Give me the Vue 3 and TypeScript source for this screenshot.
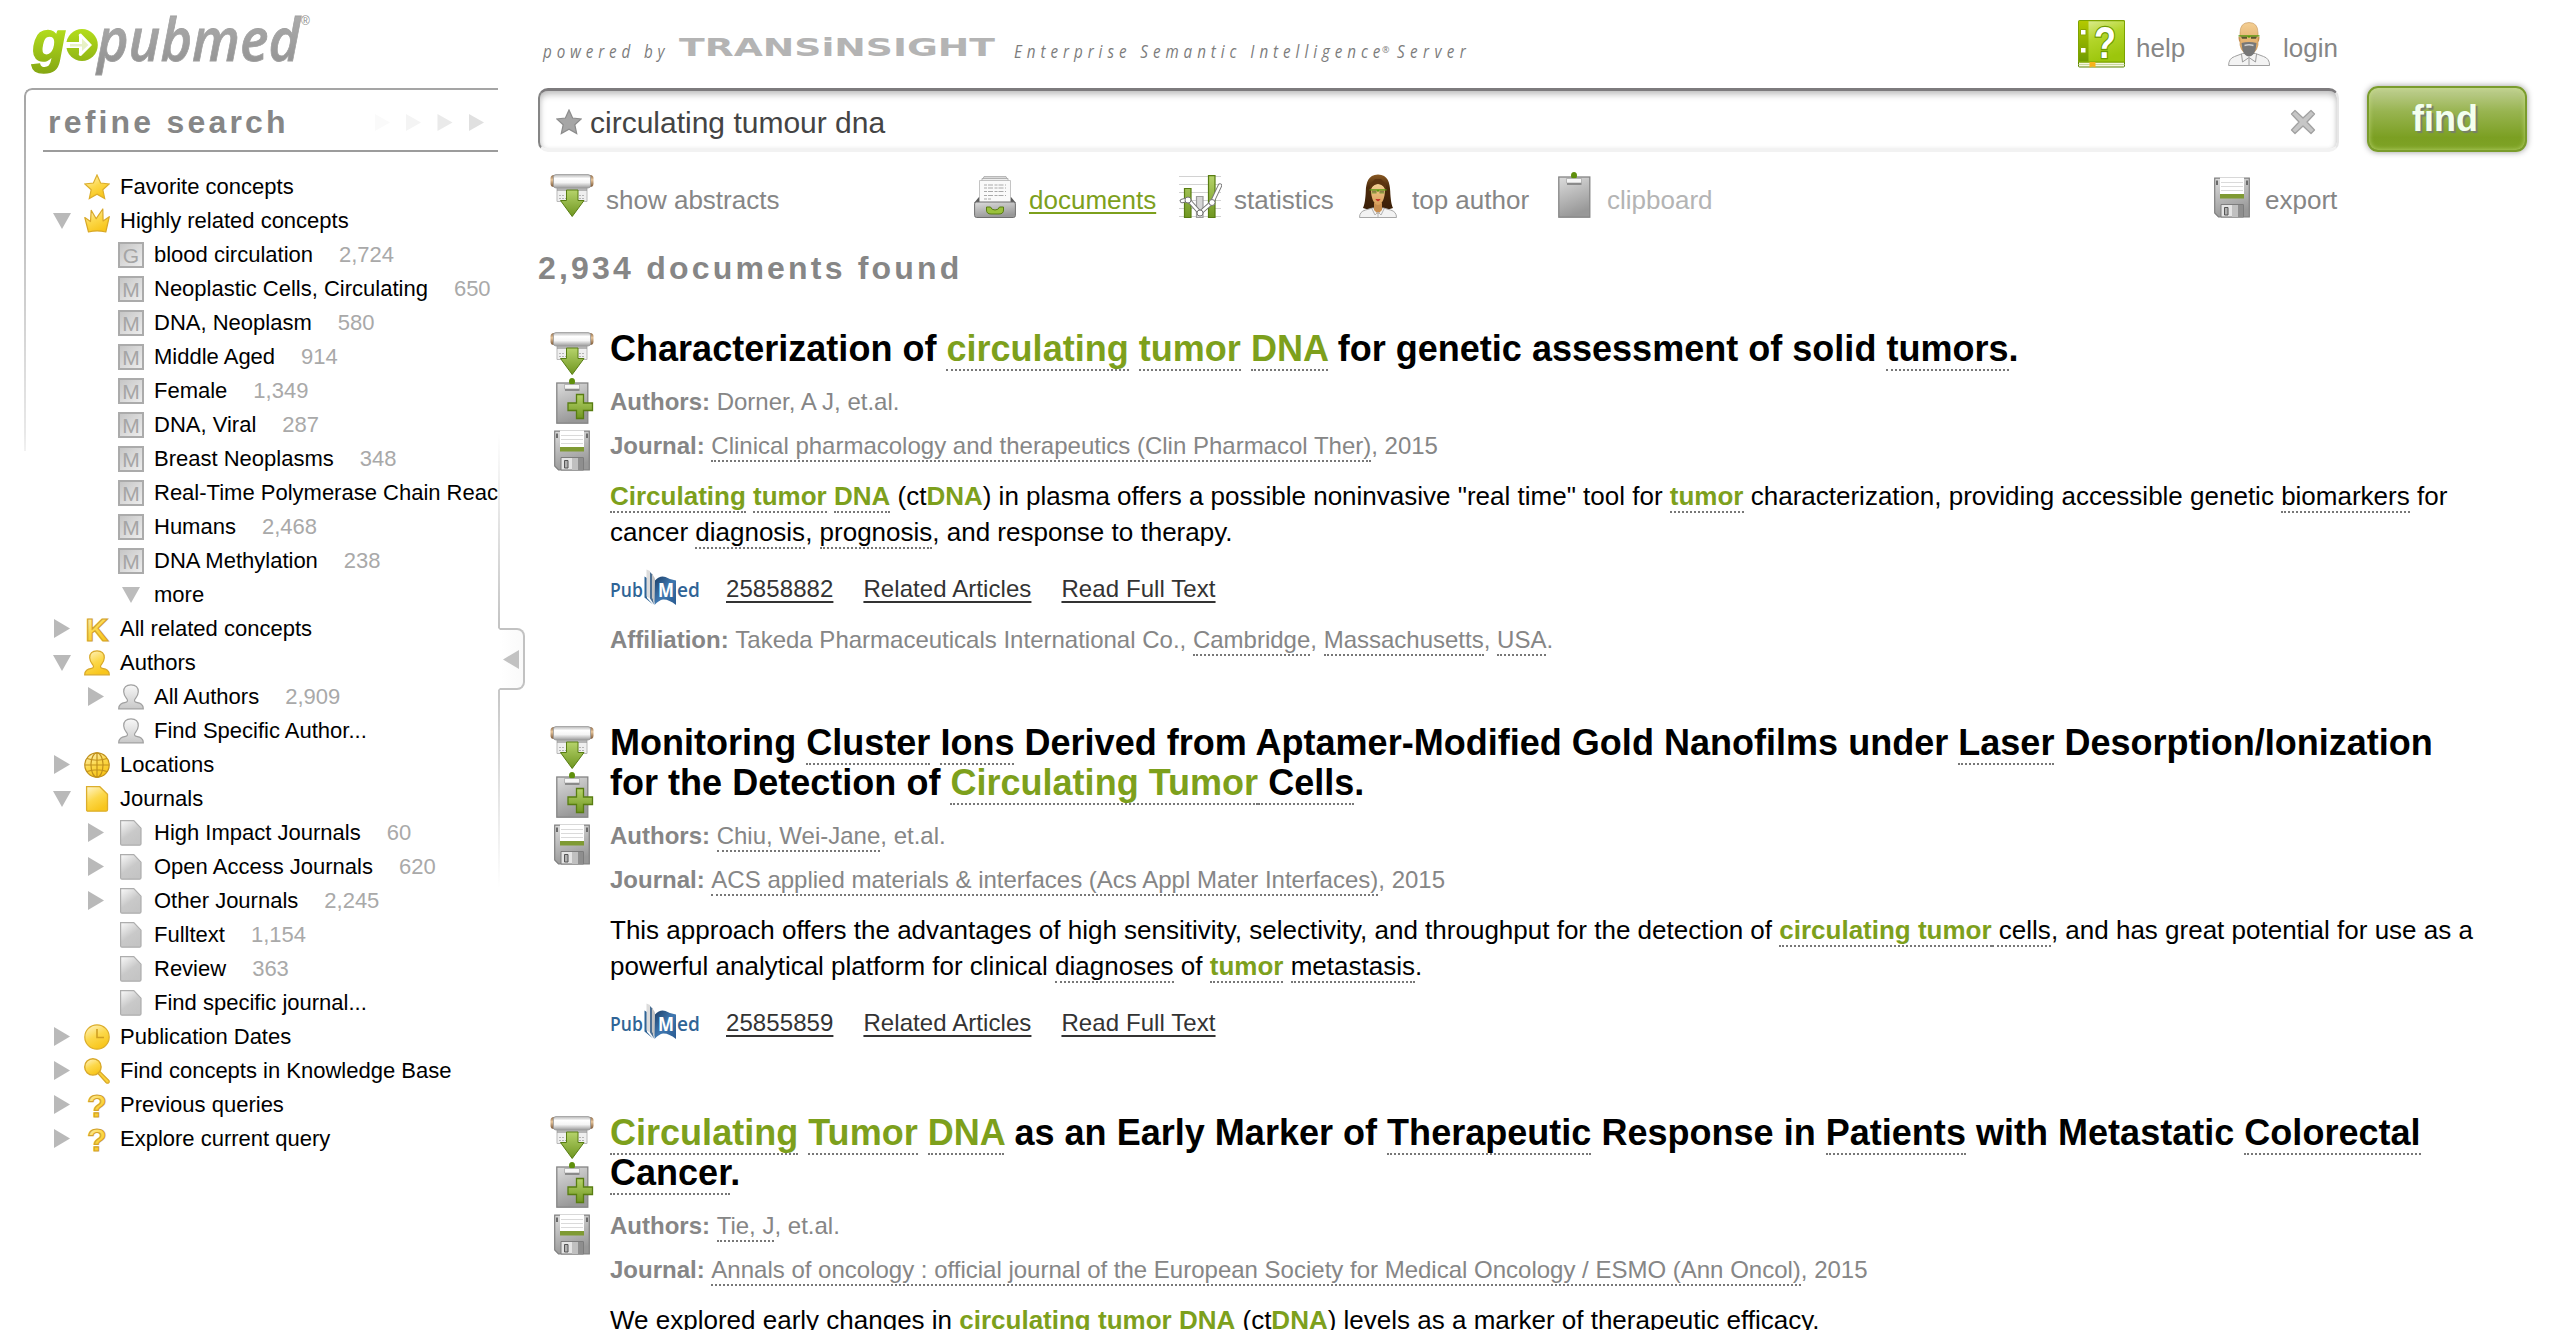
<script setup lang="ts">
type Run = [text: string, style?: string]

interface TreeNode {
  label: string
  level: 1 | 2
  icon: string
  toggle?: 'open' | 'closed'
  count?: string
}

interface Result {
  title: Run[]
  authors: Run[]
  journal: string
  body: Run[]
  pmid: string
  affiliation?: Run[]
}

interface Tool {
  label: string
  icon: string
  w: number
  h: number
  slot: number
  state?: string
}

const mesh = (label: string, count?: string): TreeNode => ({ label, level: 2, icon: 'M', count })

const tree: TreeNode[] = [
  { label: 'Favorite concepts', level: 1, icon: 'star' },
  { label: 'Highly related concepts', level: 1, icon: 'crown', toggle: 'open' },
  { label: 'blood circulation', level: 2, icon: 'G', count: '2,724' },
  mesh('Neoplastic Cells, Circulating', '650'),
  mesh('DNA, Neoplasm', '580'),
  mesh('Middle Aged', '914'),
  mesh('Female', '1,349'),
  mesh('DNA, Viral', '287'),
  mesh('Breast Neoplasms', '348'),
  mesh('Real-Time Polymerase Chain Reaction'),
  mesh('Humans', '2,468'),
  mesh('DNA Methylation', '238'),
  { label: 'more', level: 2, icon: 'down' },
  { label: 'All related concepts', level: 1, icon: 'letter-K', toggle: 'closed' },
  { label: 'Authors', level: 1, icon: 'person', toggle: 'open' },
  { label: 'All Authors', level: 2, icon: 'person-grey', toggle: 'closed', count: '2,909' },
  { label: 'Find Specific Author...', level: 2, icon: 'person-grey' },
  { label: 'Locations', level: 1, icon: 'globe', toggle: 'closed' },
  { label: 'Journals', level: 1, icon: 'page', toggle: 'open' },
  { label: 'High Impact Journals', level: 2, icon: 'page-grey', toggle: 'closed', count: '60' },
  { label: 'Open Access Journals', level: 2, icon: 'page-grey', toggle: 'closed', count: '620' },
  { label: 'Other Journals', level: 2, icon: 'page-grey', toggle: 'closed', count: '2,245' },
  { label: 'Fulltext', level: 2, icon: 'page-grey', count: '1,154' },
  { label: 'Review', level: 2, icon: 'page-grey', count: '363' },
  { label: 'Find specific journal...', level: 2, icon: 'page-grey' },
  { label: 'Publication Dates', level: 1, icon: 'clock', toggle: 'closed' },
  { label: 'Find concepts in Knowledge Base', level: 1, icon: 'lens', toggle: 'closed' },
  { label: 'Previous queries', level: 1, icon: 'letter-?', toggle: 'closed' },
  { label: 'Explore current query', level: 1, icon: 'letter-?', toggle: 'closed' },
]

const tools: Tool[] = [
  { label: 'show abstracts', icon: 'scroll', w: 44, h: 44, slot: 56 },
  { label: 'documents', icon: 'cabinet', w: 42, h: 42, slot: 55, state: 'active' },
  { label: 'statistics', icon: 'chart', w: 43, h: 43, slot: 55 },
  { label: 'top author', icon: 'woman', w: 38, h: 44, slot: 53 },
  { label: 'clipboard', icon: 'clip', w: 36, h: 46, slot: 49, state: 'disabled' },
  { label: 'export', icon: 'floppy', w: 36, h: 41, slot: 51 },
]

const results: Result[] = [
  {
    title: [
      ['Characterization of '], ['circulating', 'hit term'], [' '], ['tumor', 'hit term'], [' '], ['DNA', 'hit term'],
      [' for genetic assessment of solid '], ['tumors', 'term'], ['.'],
    ],
    authors: [['Dorner, A J, et.al.']],
    journal: 'Clinical pharmacology and therapeutics (Clin Pharmacol Ther)',
    body: [
      ['Circulating', 'hit term'], [' '], ['tumor', 'hit term'], [' '], ['DNA', 'hit term'], [' (ct'], ['DNA', 'hit'],
      [') in plasma offers a possible noninvasive "real time" tool for '], ['tumor', 'hit term'],
      [' characterization, providing accessible genetic '], ['biomarkers', 'term'], [' for cancer '],
      ['diagnosis', 'term'], [', '], ['prognosis', 'term'], [', and response to therapy.'],
    ],
    pmid: '25858882',
    affiliation: [
      ['Takeda Pharmaceuticals International Co., '], ['Cambridge', 'term'], [', '], ['Massachusetts', 'term'],
      [', '], ['USA', 'term'], ['.'],
    ],
  },
  {
    title: [
      ['Monitoring '], ['Cluster', 'term'], [' '], ['Ions', 'term'],
      [' Derived from Aptamer-Modified Gold Nanofilms under '], ['Laser', 'term'],
      [' Desorption/Ionization for the Detection of '], ['Circulating Tumor', 'hit term'], [' Cells', 'term'], ['.'],
    ],
    authors: [['Chiu, Wei-Jane', 'term'], [', et.al.']],
    journal: 'ACS applied materials & interfaces (Acs Appl Mater Interfaces)',
    body: [
      ['This approach offers the advantages of high sensitivity, selectivity, and throughput for the detection of '],
      ['circulating tumor', 'hit term'], [' cells', 'term'],
      [', and has great potential for use as a powerful analytical platform for clinical '], ['diagnoses', 'term'],
      [' of '], ['tumor', 'hit term'], [' '], ['metastasis', 'term'], ['.'],
    ],
    pmid: '25855859',
  },
  {
    title: [
      ['Circulating', 'hit term'], [' '], ['Tumor', 'hit term'], [' '], ['DNA', 'hit term'],
      [' as an Early Marker of '], ['Therapeutic', 'term'], [' Response in '], ['Patients', 'term'],
      [' with Metastatic '], ['Colorectal', 'term'], [' '], ['Cancer', 'term'], ['.'],
    ],
    authors: [['Tie, J', 'term'], [', et.al.']],
    journal: 'Annals of oncology : official journal of the European Society for Medical Oncology / ESMO (Ann Oncol)',
    body: [
      ['We explored early changes in '], ['circulating', 'hit term'], [' '], ['tumor', 'hit term'], [' '],
      ['DNA', 'hit term'], [' (ct'], ['DNA', 'hit'], [') levels as a marker of therapeutic efficacy.'],
    ],
    pmid: '25851626',
  },
]
</script>

<template>
  <div class="page">
    <svg class="defs" width="0" height="0" aria-hidden="true">
      <defs>
        <linearGradient id="gold" x1="0" y1="0" x2=".5" y2="1"><stop offset="0" stop-color="#fff6d0" /><stop offset=".55" stop-color="#fcd84a" /><stop offset="1" stop-color="#f8c61c" /></linearGradient>
        <linearGradient id="silver" x1="0" y1="0" x2=".6" y2="1"><stop offset="0" stop-color="#fafafa" /><stop offset=".6" stop-color="#c9c9c9" /><stop offset="1" stop-color="#c4c4c4" /></linearGradient>
        <linearGradient id="silverSoft" x1="0" y1="0" x2="0" y2="1"><stop offset="0" stop-color="#f8f8f8" /><stop offset="1" stop-color="#c8c8c8" /></linearGradient>
        <linearGradient id="metal" x1="0" y1="0" x2=".3" y2="1"><stop offset="0" stop-color="#dcdcdc" /><stop offset="1" stop-color="#989898" /></linearGradient>
        <linearGradient id="roll" x1="0" y1="0" x2="0" y2="1"><stop offset="0" stop-color="#b5b5b5" /><stop offset=".3" stop-color="#fff" /><stop offset=".6" stop-color="#f4f4f4" /><stop offset="1" stop-color="#9a9a9a" /></linearGradient>
        <linearGradient id="wood" x1="0" y1="0" x2="0" y2="1"><stop offset="0" stop-color="#8d6b4a" /><stop offset=".4" stop-color="#e6c49a" /><stop offset="1" stop-color="#7a5636" /></linearGradient>
        <linearGradient id="leaf" x1="0" y1="0" x2="0" y2="1"><stop offset="0" stop-color="#b6d36b" /><stop offset="1" stop-color="#6f9620" /></linearGradient>
        <linearGradient id="book" x1="0" y1="0" x2=".4" y2="1"><stop offset="0" stop-color="#e2ef9f" /><stop offset=".5" stop-color="#b3d52a" /><stop offset="1" stop-color="#9cc60c" /></linearGradient>
        <linearGradient id="spine" x1="0" y1="0" x2="0" y2="1"><stop offset="0" stop-color="#b3c900" /><stop offset="1" stop-color="#6e9a00" /></linearGradient>
        <linearGradient id="lime" gradientUnits="userSpaceOnUse" x1="0" y1="28" x2="0" y2="74"><stop offset="0" stop-color="#b4de1c" /><stop offset="1" stop-color="#84a612" /></linearGradient>
        <linearGradient id="steel" x1="0" y1="0" x2="0" y2="1"><stop offset="0" stop-color="#b4b4b4" /><stop offset="1" stop-color="#8d8d8d" /></linearGradient>
        <linearGradient id="skin" x1="0" y1="0" x2="0" y2="1"><stop offset="0" stop-color="#f4cf93" /><stop offset="1" stop-color="#d99f5a" /></linearGradient>
        <linearGradient id="hair" x1="0" y1="0" x2="0" y2="1"><stop offset="0" stop-color="#8a5a24" /><stop offset=".35" stop-color="#4e2c0c" /><stop offset="1" stop-color="#3a1f08" /></linearGradient>
        <linearGradient id="navy" x1="0" y1="0" x2="1" y2="1"><stop offset="0" stop-color="#1d3f66" /><stop offset=".5" stop-color="#3f77b0" /><stop offset="1" stop-color="#2a5b91" /></linearGradient>
      </defs>

      <symbol id="i-star" viewBox="0 0 26 26"><path d="M13 1l3.6 8 8.6.9-6.4 5.8 1.900 8.800L13 20.200l-7.700 4.300 1.900-8.800L.8 9.900l8.600-.9z" fill="url(#gold)" stroke="#dcae2c" stroke-width="1.200" /></symbol>
      <symbol id="i-star-grey" viewBox="0 0 26 26"><path d="M13 1l3.600 8 8.600.9-6.400 5.800 1.900 8.800L13 20.200l-7.700 4.300 1.900-8.800L.8 9.900l8.600-.9z" fill="#a6a6a6" stroke="#8c8c8c" stroke-width="1.200" /></symbol>
      <symbol id="i-crown" viewBox="0 0 26 26"><path d="M4.500 24L.8 9.500l5.700 4L7.200 2.300l5 8.400L18.800 1l.3 12 6.200-4.300L21.800 24q-8.800-2.200-17.300 0z" fill="url(#gold)" stroke="#d8a828" stroke-width="1.200" stroke-linejoin="round" /></symbol>
      <symbol id="i-person" viewBox="0 0 26 26"><path d="M13 .8c4.800 0 7.300 3 7.300 7 0 3.600-2 5.600-3.400 7.400-.8 1.500-.3 2.800 1.600 3.200 4 .8 6.800 1.800 6.800 6.400H.7c0-4.600 2.800-5.600 6.800-6.400 1.900-.4 2.400-1.700 1.600-3.200-1.400-1.800-3.400-3.800-3.400-7.400 0-4 2.500-7 7.300-7z" fill="url(#gold)" stroke="#d8a828" stroke-width="1.200" /></symbol>
      <symbol id="i-person-grey" viewBox="0 0 26 26"><path d="M13 .8c4.800 0 7.300 3 7.300 7 0 3.600-2 5.600-3.400 7.400-.8 1.500-.3 2.800 1.600 3.200 4 .8 6.800 1.800 6.800 6.400H.7c0-4.600 2.800-5.600 6.800-6.400 1.900-.4 2.400-1.700 1.600-3.200-1.400-1.800-3.400-3.800-3.400-7.400 0-4 2.500-7 7.300-7z" fill="url(#silverSoft)" stroke="#a0a0a0" stroke-width="1.200" /></symbol>
      <symbol id="i-globe" viewBox="0 0 26 26"><g fill="none" stroke="#c1911c" stroke-width="1.200"><circle cx="13" cy="13" r="12.200" fill="url(#gold)" /><ellipse cx="13" cy="13" rx="6" ry="12.200" /><path d="M13 .8v24.400M.8 13h24.400M3 6.500q10 3.500 20 0M3 19.500q10-3.500 20 0" /></g></symbol>
      <symbol id="i-page" viewBox="0 0 26 26"><path d="M2.600.7h13.200l7.700 7.500v15.500q0 1.500-1.500 1.500H4q-1.400 0-1.400-1.500z" fill="url(#gold)" stroke="#dcae2c" stroke-width="1.300" /></symbol>
      <symbol id="i-page-grey" viewBox="0 0 26 26"><path d="M2.600.7h13.200l7.200 7.500v15.500q0 1.500-1.500 1.500H4q-1.400 0-1.400-1.500z" fill="url(#silver)" stroke="#adadad" stroke-width="1.200" /></symbol>
      <symbol id="i-clock" viewBox="0 0 26 26"><circle cx="13" cy="13" r="12.200" fill="url(#gold)" stroke="#dcae2c" stroke-width="1.200" /><path d="M13 5v8.500h7" fill="none" stroke="#cf9f22" stroke-width="1.600" /></symbol>
      <symbol id="i-lens" viewBox="0 0 26 26"><path d="M13.500 15l2-2 9.300 9.300q1 1.800-.3 2.700-1.300.6-2.500-.5z" fill="#fbd23a" stroke="#d8a828" stroke-width="1.200" /><circle cx="8.900" cy="8.900" r="8.200" fill="url(#gold)" stroke="#d8a828" stroke-width="1.400" /></symbol>
      <symbol id="i-down" viewBox="0 0 26 26"><path d="M4 5h18l-9 16z" fill="#bcbcbc" /></symbol>

      <symbol id="i-scroll" viewBox="0 0 44 44">
        <path d="M7 12h30v15.500H7z" fill="#efefef" stroke="#b9b9b9" /><path d="M7 13h30v4H7z" fill="#8d8d8d" opacity=".6" />
        <path d="M9 21.500h6M9 24.500h7M29 21.500h6M29 24.500h6" stroke="#b5b5b5" stroke-dasharray="2 1" />
        <rect x=".5" y="1" width="9" height="12" rx="3.500" fill="url(#wood)" /><rect x="34.500" y="1" width="9" height="12" rx="3.500" fill="url(#wood)" />
        <rect x="3.500" y=".5" width="37" height="13.500" rx="2.500" fill="url(#roll)" stroke="#9c9c9c" stroke-width=".8" />
        <path d="M16.500 16h11.500v10.500h6L22.200 42.500 10.500 26.500h6z" fill="url(#leaf)" stroke="#587d12" />
      </symbol>
      <symbol id="i-clip" viewBox="0 0 36 46">
        <rect x=".8" y="5" width="31" height="40.200" fill="url(#metal)" stroke="#858585" stroke-width="1.300" />
        <ellipse cx="16" cy="3.500" rx="3" ry="3.500" fill="#5f8f0c" /><path d="M8.500 6.500h15v4.500h-15z" fill="#f6f6f6" stroke="#aaa" stroke-width=".8" /><path d="M9 12h14.500" stroke="#7d7d7d" stroke-width="1.600" />
      </symbol>
      <symbol id="i-plus" viewBox="0 0 38 46">
        <use href="#i-clip" width="36" height="46" />
        <path d="M20.500 16.500h7v8.500h9v7.500h-9v8h-7v-8H12V25h8.500z" fill="url(#leaf)" stroke="#587d12" stroke-width="1.300" />
      </symbol>
      <symbol id="i-floppy" viewBox="0 0 36 41">
        <path d="M.7 1.200h34.600v38.800H4.500L.7 36z" fill="url(#metal)" stroke="#7f7f7f" stroke-width="1.200" />
        <path d="M6 .6h24v17H6z" fill="#fff" /><path d="M7 5.500h22M7 9.500h22M7 13.500h22" stroke="#dadada" stroke-width="1.200" /><path d="M6 17h24v4.500H6z" fill="#7f9a33" />
        <path d="M2 3.500h2v4.500H2zM32 3.500h2v4.500h-2z" fill="#6b6b6b" />
        <path d="M7 27.500h22.500V40H7z" fill="#e4e4e4" stroke="#7d7d7d" /><path d="M18 28h6v12h-6z" fill="#c0c0c0" /><path d="M24 28h5v12h-5z" fill="#8e8e8e" /><path d="M10.500 30.500h3.500v7.500h-3.500z" fill="#b0b0b0" stroke="#555" />
      </symbol>
      <symbol id="i-cabinet" viewBox="0 0 42 42">
        <path d="M0 27l5-6h32l5 6z" fill="#5c5c5c" />
        <path d="M10 .6h22l3 6H7z" fill="#dedede" stroke="#a5a5a5" stroke-width=".8" /><path d="M8 2.500h26v4H8z" fill="#efefef" stroke="#a5a5a5" stroke-width=".8" />
        <path d="M5.500 4.500h31V27h-31z" fill="#fafafa" stroke="#b5b5b5" stroke-width=".8" />
        <path d="M10 9h22M10 12h22M10 15.500h22M10 19.500h22M10 23h7" stroke="#a9a9a9" stroke-width="1.200" stroke-dasharray="3 1 5 1.500" />
        <rect x=".6" y="26" width="40.800" height="15.500" rx="2" fill="url(#metal)" stroke="#6f6f6f" />
        <path d="M12.500 31h4q1 3 4.500 3t4.500-3h4v3q0 4-4.500 4h-8q-4.500 0-4.500-4z" fill="#9ac13b" stroke="#587d12" />
      </symbol>
      <symbol id="i-chart" viewBox="0 0 43 43">
        <path d="M0 1.500h42M0 9.500h42M0 17.500h42M0 25.500h42M0 33.500h42M0 41.500h42" stroke="#d2d2d2" />
        <g stroke-width="1.200"><path d="M5.500 13.500h6.500v29H5.500zM29.500.6H36v42h-6.500z" fill="url(#leaf)" stroke="#587d12" /><path d="M17.500 21.500H24v21h-6.500z" fill="#d5d5d5" stroke="#9c9c9c" /></g>
        <path d="M3 26l6-1.500L21 38l12-10.500L41 10.500" fill="none" stroke="#777" stroke-width="4.400" stroke-linecap="round" /><path d="M3 26l6-1.500L21 38l12-10.500L41 10.500" fill="none" stroke="#fff" stroke-width="2.600" stroke-linecap="round" />
        <g fill="#fff" stroke="#777"><circle cx="9" cy="25" r="3" /><circle cx="21" cy="38" r="3" /><circle cx="33" cy="27.500" r="3" /></g>
      </symbol>
      <symbol id="i-woman" viewBox="0 0 38 44">
        <path d="M19 .4C9 .4 7.200 9 6.800 17 6.500 25 5.500 31 4 34q5 2 9 1h12q4 1 9-1c-1.500-3-2.500-9-2.800-17C30.800 9 29 .4 19 .4z" fill="url(#hair)" />
        <path d="M.5 43.500q0-6 6-7.500l7-2h11l7 2q6 1.500 6 7.500z" fill="#f3f3f3" stroke="#a8a8a8" /><path d="M15 29h8v7l-4 4-4-4z" fill="#c98f50" />
        <path d="M12 16q0-5 7-6 7 1 7 6c0 8-3 15-7 15s-7-7-7-15z" fill="url(#skin)" />
        <path d="M11 16q3-5 8-7.500 5 2.500 8 7.500V10l-5-5h-6l-5 5z" fill="#5d3510" />
        <path d="M12.500 16.500h5v2.200h-4.300zM20.500 16.500h5l-.7 2.200h-4.300z" fill="#8c8048" /><path d="M10.500 15.800h17M18 16.500q1 1 2 0" fill="none" stroke="#5a9a10" stroke-width="1.300" /><path d="M12.500 19h5M20.500 19h5" stroke="#6d9a2c" stroke-width=".8" />
        <path d="M16.800 25.500h4.400L19 27z" fill="#c02020" stroke="#c02020" stroke-width=".6" />
        <path d="M13 35l3 6 3-3 3 3 3-6M19 38v5" fill="none" stroke="#b2b2b2" />
      </symbol>
      <symbol id="i-man" viewBox="0 0 42 44">
        <path d="M.6 43.500q0-7 6-9l8-3h13l8 3q6 2 6 9z" fill="#f3f3f3" stroke="#a0a0a0" />
        <path d="M10.500 15q2-1 2 5-2 0-2-5zM31.500 15q-2-1-2 5 2 0 2-5z" fill="#c98f50" /><path d="M12 11q0-10.500 9-10.500T30 11v12q-2 9-9 9t-9-9z" fill="url(#skin)" stroke="#c29050" stroke-width=".6" />
        <path d="M13 14.500h6v2.200h-5zM23 14.500h6l-1 2.200h-5z" fill="#5a5530" /><path d="M10.500 13.800h21M19.500 14.500q1.500 1 3 0" fill="none" stroke="#5a9a10" stroke-width="1.300" />
        <path d="M13.500 21q7.500-2 15 0l-1 7q-2 6-6.500 6.500-4.500-.5-6.500-6.500z" fill="#777" /><path d="M16.500 23.500q4.500-1.500 9 0" stroke="#d0d0d0" stroke-width="1.500" fill="none" />
        <path d="M13.500 32l1 8 6.500-4.500 6.500 4.500 1-8M21 36v7" fill="none" stroke="#9c9c9c" />
      </symbol>
      <symbol id="i-help" viewBox="0 0 47 48">
        <path d="M.5 41.500h46v4.500q0 1-1 1h-44q-1 0-1-1z" fill="#f7f7e0" stroke="#5c8500" /><path d="M.5 44.500h46" stroke="#c9d8a0" />
        <rect x=".6" y=".6" width="46" height="41.500" rx="1.200" fill="url(#book)" stroke="#7da300" stroke-width="1.200" /><path d="M1 1h9.500v40.500H1z" fill="url(#spine)" />
        <path d="M2.500 9.500h5.500v5.500H2.500zM2.500 27.500h5.500V33H2.500z" fill="#fff" stroke="#8aa600" /><path d="M11.500 42h6v5.500l-3-1-3 1z" fill="#f7b21b" />
      </symbol>
      <symbol id="i-close" viewBox="0 0 26 26"><path d="M5 1.500l8 7.500 8-7.500L24.500 5 17 13l7.500 8-3.500 3.500-8-7.500-8 7.500L1.500 21 9 13 1.500 5z" fill="#c6c6c6" stroke="#a2a2a2" stroke-width="1.300" stroke-linejoin="round" /></symbol>
    </svg>

    <aside class="sidebar">
      <svg class="logo" width="320" height="88" viewBox="0 0 320 88">
        <text x="32" y="61" font-family="Liberation Sans, sans-serif" font-style="italic" font-weight="700" font-size="58" textLength="34" lengthAdjust="spacingAndGlyphs" fill="url(#lime)" stroke="url(#lime)" stroke-width="1.500">g</text>
        <ellipse cx="82" cy="45" rx="15.800" ry="16" fill="url(#lime)" />
        <path d="M65 42h14v-5.500q-1-3 2-3L92 45 81 56q-3 0-2-3v-5H65z" fill="#fff" /><path d="M70 44h12v-5.500l6.500 6.500-6.500 6V46.500H70z" fill="url(#lime)" opacity=".25" />
        <text x="97" y="61" font-family="Open Sans, sans-serif" font-style="italic" font-size="60" font-weight="600" textLength="203" lengthAdjust="spacingAndGlyphs" fill="url(#steel)" stroke="#a0a0a0" stroke-width=".8">pubmed</text>
        <text x="301" y="25" font-family="Liberation Sans, sans-serif" font-size="12" fill="#8c8c8c">®</text>
      </svg>

      <div class="panel">
        <div class="panel-head">
          <h2>refine search</h2>
          <svg class="chevrons" width="110" height="20" viewBox="0 0 110 20">
            <path d="M1 1v17l15-8.500z" fill="#fafafa" /><path d="M32 1v17l15-8.500z" fill="#f4f4f4" /><path d="M63.500 1v17l15-8.500z" fill="#eaeaea" /><path d="M95 1v17l15-8.500z" fill="#e0e0e0" />
          </svg>
        </div>
        <ul class="tree">
          <li v-for="(node, i) in tree" :key="i" :class="['lvl' + node.level]">
            <span class="toggle">
              <svg v-if="node.toggle === 'open'" width="18" height="16" viewBox="0 0 18 16"><path d="M0 0h18L9 16z" fill="#b9b9b9" /></svg>
              <svg v-else-if="node.toggle === 'closed'" class="closed" width="16" height="19" viewBox="0 0 16 19"><path d="M0 0l16 9.500L0 19z" fill="#b9b9b9" /></svg>
            </span>
            <span v-if="node.icon.length === 1" class="badge">{{ node.icon }}</span>
            <svg v-else-if="node.icon.startsWith('letter-')" class="glyph" width="26" height="26" viewBox="0 0 26 26">
              <text x="13" y="24.500" text-anchor="middle" font-family="Liberation Sans, sans-serif" font-weight="700" font-size="32" fill="url(#gold)" stroke="#d3a32a" stroke-width="1.200">{{ node.icon.slice(7) }}</text>
            </svg>
            <svg v-else class="glyph" width="26" height="26"><use :href="'#i-' + node.icon" /></svg>
            <span>{{ node.label }}</span>
            <span v-if="node.count" class="count">{{ node.count }}</span>
          </li>
        </ul>
        <div class="edge"></div>
        <div class="handle"><svg width="17" height="19" viewBox="0 0 17 19"><path d="M16 0v19L0 9.500z" fill="#c2c2c2" /></svg></div>
      </div>
    </aside>

    <main>
      <header>
        <svg class="tagline" width="940" height="88" viewBox="0 0 940 88">
          <g font-family="Open Sans, sans-serif" font-style="italic" fill="#7c7c7c" font-size="19">
            <g transform="translate(5 58) scale(.8 1)"><text textLength="152">powered by</text></g>
            <g transform="translate(476 58) scale(.8 1)"><text textLength="458">Enterprise Semantic Intelligence</text></g>
            <text x="844" y="53" font-size="9">®</text>
            <g transform="translate(859 58) scale(.8 1)"><text textLength="86">Server</text></g>
          </g>
          <text x="141" y="56" font-family="DejaVu Sans, sans-serif" font-weight="700" font-size="24" textLength="316" lengthAdjust="spacingAndGlyphs" fill="#b4b4b4">TRANSiNSIGHT</text>
        </svg>
        <a class="account help">
          <svg width="47" height="48" viewBox="0 0 47 48">
            <use href="#i-help" width="47" height="48" />
            <text x="16" y="38" textLength="22" lengthAdjust="spacingAndGlyphs" font-family="Liberation Sans, sans-serif" font-weight="700" font-size="45" fill="#fff" stroke="#6c9a00" stroke-width="2.600" paint-order="stroke">?</text>
          </svg>
          <span>help</span>
        </a>
        <a class="account login"><svg width="42" height="44"><use href="#i-man" /></svg><span>login</span></a>
      </header>

      <div class="search">
        <div class="field">
          <svg width="26" height="26"><use href="#i-star-grey" /></svg>
          <span class="query">circulating tumour dna</span>
          <svg class="clear" width="26" height="26"><use href="#i-close" /></svg>
        </div>
        <button type="button">find</button>
      </div>

      <nav class="tools">
        <a v-for="tool in tools" :key="tool.label" :class="tool.state">
          <span class="slot" :style="{ width: tool.slot + 'px' }"><svg :width="tool.w" :height="tool.h"><use :href="'#i-' + tool.icon" /></svg></span>
          <span class="label">{{ tool.label }}</span>
        </a>
      </nav>

      <h1>2,934 documents found</h1>

      <article v-for="r in results" :key="r.pmid">
        <div class="actions">
          <svg width="44" height="44"><use href="#i-scroll" /></svg>
          <svg class="add" width="38" height="46"><use href="#i-plus" /></svg>
          <svg class="save" width="36" height="41"><use href="#i-floppy" /></svg>
        </div>
        <div class="record">
          <h3><span v-for="(t, i) in r.title" :key="i" :class="t[1]">{{ t[0] }}</span></h3>
          <p class="meta"><b>Authors:</b>&nbsp;<span v-for="(t, i) in r.authors" :key="i" :class="t[1]">{{ t[0] }}</span></p>
          <p class="meta"><b>Journal:</b>&nbsp;<span class="term">{{ r.journal }}</span>, 2015</p>
          <p class="body"><span v-for="(t, i) in r.body" :key="i" :class="t[1]">{{ t[0] }}</span></p>
          <div class="links">
            <svg width="90" height="38" viewBox="0 0 90 38">
              <path d="M34.500 7.500L37 9v20l6 6.500-8.500-7z" fill="#2f6496" /><path d="M40 3l3 3v24l1 5.500-4-6z" fill="#4d6f92" />
              <path d="M36.500.5L40 2v27.500l-3.500-2z" fill="#dcdcdc" /><path d="M42 4.500l3 5V34l-3-5z" fill="#c4c4c4" />
              <path d="M45 11.500q5-5.500 10.500-3.500 5 3 10.500 3.500v24.500q-7.500-6-13-5.500-4 .5-8.500 5.500z" fill="url(#navy)" />
              <g font-family="Open Sans, sans-serif" font-weight="600" font-size="19" fill="#2f6496">
                <text x="0" y="28" textLength="33" lengthAdjust="spacingAndGlyphs">Pub</text>
                <text x="67" y="28" textLength="23" lengthAdjust="spacingAndGlyphs">ed</text>
              </g>
              <text x="48" y="28" font-family="Open Sans, sans-serif" font-weight="700" font-size="20" textLength="16" lengthAdjust="spacingAndGlyphs" fill="#fff">M</text>
            </svg>
            <a>{{ r.pmid }}</a><a>Related Articles</a><a>Read Full Text</a>
          </div>
          <p v-if="r.affiliation" class="meta"><b>Affiliation:</b>&nbsp;<span v-for="(t, i) in r.affiliation" :key="i" :class="t[1]">{{ t[0] }}</span></p>
        </div>
      </article>
    </main>
  </div>
</template>

<style>
body {
  margin: 0;
  background: #fff;
}
</style>

<style scoped>
.page {
  display: flex;
  width: 2560px;
  height: 1330px;
  overflow: hidden;
  background: #fff;
  font-family: 'Liberation Sans', Arial, sans-serif;
  color: #000;
}
.defs {
  position: absolute;
}
svg {
  display: block;
  flex: none;
}
h1, h2, h3, p, ul {
  margin: 0;
  padding: 0;
}

.sidebar {
  width: 538px;
  flex: none;
}
.panel {
  position: relative;
  width: 474px;
  margin-left: 24px;
  padding-top: 2px;
}
.panel::before {
  content: '';
  position: absolute;
  inset: 0 0 auto 0;
  height: 363px;
  box-sizing: border-box;
  border: 2px solid #a5a5a5;
  border-width: 2px 0 0 2px;
  border-top-left-radius: 8px;
  -webkit-mask-image: linear-gradient(#000, rgba(0, 0, 0, 0.25) 95%, rgba(0, 0, 0, 0.15));
  mask-image: linear-gradient(#000, rgba(0, 0, 0, 0.25) 95%, rgba(0, 0, 0, 0.15));
}
.panel-head {
  display: flex;
  align-items: flex-start;
  height: 60px;
  margin-left: 19px;
  border-bottom: 2px solid #9c9c9c;
}
.panel-head h2 {
  width: 331px;
  padding-left: 5px;
  box-sizing: border-box;
  font-size: 32px;
  line-height: 64px;
  letter-spacing: 3.2px;
  color: #868686;
}
.chevrons {
  margin-top: 23px;
}
.tree {
  list-style: none;
  padding-top: 18px;
  overflow: hidden;
}
.tree li {
  display: flex;
  align-items: flex-start;
  height: 34px;
  padding-left: 26px;
  font-size: 22px;
  line-height: 34px;
  white-space: nowrap;
}
.tree .lvl2 {
  padding-left: 60px;
}
.toggle {
  display: flex;
  justify-content: center;
  width: 24px;
  margin-right: 10px;
  padding-top: 9px;
  flex: none;
}
.toggle .closed {
  margin-top: -2px;
}
.glyph,
.badge {
  width: 26px;
  height: 26px;
  margin: 4px 10px 0 0;
  flex: none;
}
.badge {
  box-sizing: border-box;
  border: 2px solid #ababab;
  background: linear-gradient(135deg, #c6c6c6, #ededed);
  color: #a5a5a5;
  font-size: 21px;
  line-height: 23px;
  text-align: center;
}
.count {
  margin-left: 26px;
  color: #a9a9a9;
}
.edge {
  position: absolute;
  left: 474px;
  top: 345px;
  width: 2px;
  height: 455px;
  background: linear-gradient(rgba(190, 190, 190, 0), #c4c4c4 42%, #c8c8c8 58%, rgba(190, 190, 190, 0));
}
.handle {
  position: absolute;
  left: 474px;
  top: 540px;
  display: flex;
  align-items: center;
  box-sizing: border-box;
  width: 27px;
  height: 62px;
  padding-left: 3px;
  border: 2px solid #c2c2c2;
  border-left-color: #fff;
  border-radius: 0 8px 8px 0;
  background: linear-gradient(90deg, #fff, #fafafa);
}

main {
  width: 2022px;
  flex: none;
}
header {
  display: flex;
  align-items: flex-start;
  height: 88px;
}
.tagline {
  margin-right: 600px;
}
.account {
  display: flex;
  align-items: flex-start;
  font-size: 26px;
  line-height: 30px;
  color: #868686;
}
.account span {
  margin-top: 33px;
}
.help {
  width: 150px;
}
.help svg {
  margin: 20px 11px 0 0;
}
.login svg {
  margin: 22px 13px 0 0;
}

.search {
  display: flex;
  height: 64px;
}
.field {
  display: flex;
  align-items: center;
  box-sizing: border-box;
  width: 1801px;
  height: 64px;
  padding: 0 21px 0 16px;
  border-radius: 10px;
  border-style: solid;
  border-width: 3px 2px 3px 2px;
  border-color: #7d7b7d #e6e6e6 #f2f2f2 #858585;
  box-shadow: inset 0 4px 6px rgba(0, 0, 0, 0.22), inset 0 0 5px rgba(0, 0, 0, 0.08);
}
.field svg {
  margin-top: 3px;
}
.query {
  flex: 1;
  padding: 5px 0 0 8px;
  font-size: 30px;
  line-height: 36px;
  color: #444;
}
.search button {
  width: 160px;
  height: 66px;
  margin: -2px 0 0 28px;
  padding: 0 4px 1px 0;
  border: 2px solid #7a9c2c;
  border-radius: 11px;
  background: linear-gradient(#c0cf93, #98b450 38%, #7b9f22 80%, #7ea325);
  box-shadow: 0 0 6px rgba(0, 0, 0, 0.4), inset 0 0 5px rgba(200, 225, 130, 0.8);
  font-family: inherit;
  font-size: 36px;
  font-weight: 700;
  color: #f3ffee;
  text-shadow: 2px 2px 1px #77806a;
}

.tools {
  display: grid;
  grid-template-columns: 424px 205px 180px 199px 656px auto;
  margin: 18px 0 0 12px;
  height: 48px;
  align-items: end;
  font-size: 26px;
  line-height: 30px;
  color: #868686;
}
.tools a {
  display: flex;
  align-items: flex-end;
}
.slot {
  flex: none;
}
.tools .label {
  margin-bottom: 3px;
}
.tools .active {
  color: #7da01c;
}
.tools .active .label {
  text-decoration: underline;
  text-decoration-thickness: 2px;
  text-underline-offset: 3px;
  text-decoration-skip-ink: none;
}
.tools .disabled {
  color: #b4b4b4;
}

h1 {
  margin-top: 32px;
  font-size: 32px;
  line-height: 36px;
  letter-spacing: 3.2px;
  color: #868686;
}

article {
  display: flex;
  margin: 0 0 61px 12px;
}
h1 + article {
  margin-top: 43px;
}
.actions {
  width: 60px;
  padding-top: 3px;
  flex: none;
}
.actions .add {
  margin: 2px 0 0 6px;
}
.actions .save {
  margin: 6px 0 0 4px;
}
.record {
  width: 1870px;
}
h3 {
  margin-bottom: 11px;
  font-size: 36px;
  line-height: 40px;
  letter-spacing: 0.02px;
}
.meta {
  font-size: 24px;
  line-height: 44px;
  color: #868686;
}
.body {
  margin-top: 10px;
  font-size: 26px;
  line-height: 36px;
}
.hit {
  color: #7da01c;
  font-weight: 700;
}
.term {
  border-bottom: 2px dotted #777;
}
.meta .term {
  padding-bottom: 1px;
}
.links {
  display: flex;
  margin: 17px 0 7px;
  height: 44px;
  font-size: 24px;
  line-height: 44px;
  letter-spacing: 0.08px;
  color: #333;
}
.links svg {
  margin: 2px 26px 0 0;
}
.links a {
  margin-right: 30px;
  text-decoration: underline;
  text-decoration-thickness: 2px;
  text-underline-offset: 4px;
  text-decoration-skip-ink: none;
}
</style>
